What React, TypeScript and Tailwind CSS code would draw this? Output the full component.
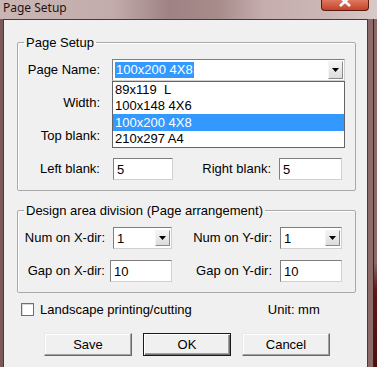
import React from "react";

const sunken =
  "bg-white border border-t-[#7f7f7f] border-l-[#7f7f7f] border-r-[#d0d0d0] border-b-[#d0d0d0]";

function Field({ w, value }: { w: string; value: string }) {
  return (
    <div className={`h-[22px] ${w} ${sunken} flex items-center pl-[3px] leading-none`}>
      {value}
    </div>
  );
}

function DropBtn({ h }: { h: string }) {
  return (
    <div
      className={`${h} w-[15px] ml-auto mr-[1px] flex items-center justify-center border border-t-[#f4f4f4] border-l-[#f4f4f4] border-r-[#8a8a8a] border-b-[#8a8a8a] bg-[linear-gradient(#f4f4f4,#dcdcdc)]`}
    >
      <svg width="7" height="4" viewBox="0 0 7 4">
        <path d="M0 0H7L3.5 4Z" fill="#000" />
      </svg>
    </div>
  );
}

function Combo({ w, value }: { w: string; value: string }) {
  return (
    <div className={`h-[22px] ${w} ${sunken} flex items-center pl-[3px]`}>
      <span className="leading-none">{value}</span>
      <DropBtn h="h-[16px]" />
    </div>
  );
}

function Button({ label, def }: { label: string; def?: boolean }) {
  return (
    <div
      className={`w-[88px] h-[23px] flex items-center justify-center bg-[#f0f0f0] ${
        def
          ? "border border-[#1a1a1a] shadow-[inset_1px_1px_0_#ffffff,inset_-1px_-1px_0_#707070,inset_-2px_-2px_0_#a0a0a0]"
          : "border border-t-[#e8e8e8] border-l-[#e8e8e8] border-r-[#6a6a6a] border-b-[#6a6a6a] shadow-[inset_-1px_-1px_0_#a0a0a0,inset_1px_1px_0_#ffffff]"
      }`}
    >
      {label}
    </div>
  );
}

export default function App() {
  return (
    <div className="w-[377px] h-[367px] overflow-hidden flex flex-col bg-[#7d5a5a] font-['Liberation_Sans',Arial,sans-serif] text-[13px] text-black">
      {/* title bar */}
      <div className="h-[19px] shrink-0 flex bg-[linear-gradient(90deg,#c9b6b4_0%,#c2acab_30%,#9f8283_45%,#a88c8c_58%,#c6adae_70%,#cbb5b5_85%,#d8c9c9_100%)]">
        <div className="pl-[3px] pt-[1px] text-[12px] leading-[14px] font-['Noto_Sans',sans-serif] text-[#1e1414]">
          Page Setup
        </div>
        <div className="ml-auto mr-[8px] w-[48px] h-[11px] rounded-b-[4px] border border-t-0 border-[#5e1a10] bg-[linear-gradient(#e0785f,#c2432a)] flex justify-center overflow-hidden">
          <svg width="14" height="10" viewBox="0 0 14 10" className="-mt-[3px]">
            <path d="M2 0L12 9M12 0L2 9" stroke="#ffffff" strokeWidth="2.6" />
          </svg>
        </div>
      </div>
      {/* body */}
      <div className="flex flex-1 min-h-0">
        <div className="w-[3px] bg-[#7d5a5a]" />
        <div className="w-[365px] shrink-0 border-l border-t border-r border-[#4b3838] bg-[#f0f0f0] pl-[13px] pt-[15px]">
          {/* Group 1 */}
          <fieldset className="w-[339px] border border-[#a9a9a9] rounded-[2px] pt-[9px] pb-[10px] shadow-[inset_1px_1px_0_#ffffff]">
            <legend className="ml-[6px] px-[2px] leading-[15px]">Page Setup</legend>
            <div className="flex flex-col gap-[11px]">
              <div className="flex items-center h-[22px]">
                <div className="w-[82px] text-right">Page Name:</div>
                <div className="relative ml-[12px]">
                  <div className={`h-[22px] w-[233px] ${sunken} flex items-center pl-[2px]`}>
                    <span className="bg-[#3399ff] text-white leading-[16px] px-[1px]">100x200 4X8</span>
                    <DropBtn h="h-[18px]" />
                  </div>
                  <div className="absolute left-0 top-[22px] w-[233px] border border-[#646464] bg-white z-10">
                    <div className="h-[16px] leading-[16px] pl-[2px]">89x119&nbsp;&nbsp;L</div>
                    <div className="h-[16px] leading-[16px] pl-[2px]">100x148 4X6</div>
                    <div className="h-[17px] leading-[17px] pl-[2px] bg-[#3399ff] text-white">100x200 4X8</div>
                    <div className="h-[16px] leading-[16px] pl-[2px]">210x297 A4</div>
                  </div>
                </div>
              </div>
              <div className="flex items-center h-[22px]">
                <div className="w-[82px] text-right">Width:</div>
              </div>
              <div className="flex items-center h-[22px]">
                <div className="w-[82px] text-right">Top blank:</div>
              </div>
              <div className="flex items-center h-[22px]">
                <div className="w-[82px] text-right">Left blank:</div>
                <div className="ml-[13px]">
                  <Field w="w-[60px]" value="5" />
                </div>
                <div className="w-[98px] text-right">Right blank:</div>
                <div className="ml-[8px]">
                  <Field w="w-[63px]" value="5" />
                </div>
              </div>
            </div>
          </fieldset>

          {/* Group 2 */}
          <fieldset className="mt-[12px] w-[339px] border border-[#a9a9a9] rounded-[2px] pt-[9px] pb-[10px] shadow-[inset_1px_1px_0_#ffffff]">
            <legend className="ml-[6px] px-[2px] leading-[15px]">Design area division (Page arrangement)</legend>
            <div className="flex flex-col gap-[11px]">
              <div className="flex items-center h-[22px]">
                <div className="w-[87px] text-right">Num on X-dir:</div>
                <div className="ml-[8px]">
                  <Combo w="w-[59px]" value="1" />
                </div>
                <div className="w-[100px] text-right">Num on Y-dir:</div>
                <div className="ml-[8px]">
                  <Combo w="w-[62px]" value="1" />
                </div>
              </div>
              <div className="flex items-center h-[22px]">
                <div className="w-[87px] text-right">Gap on X-dir:</div>
                <div className="ml-[5px]">
                  <Field w="w-[62px]" value="10" />
                </div>
                <div className="w-[100px] text-right">Gap on Y-dir:</div>
                <div className="ml-[8px]">
                  <Field w="w-[62px]" value="10" />
                </div>
              </div>
            </div>
          </fieldset>

          {/* checkbox row */}
          <div className="mt-[9px] flex items-center h-[15px]">
            <div className="ml-[4px] w-[13px] h-[13px] bg-white border border-[#707070] shadow-[inset_1px_1px_0_#d8d8d8]" />
            <div className="ml-[6px] leading-none">Landscape printing/cutting</div>
            <div className="ml-[76px] leading-none">Unit: mm</div>
          </div>

          {/* buttons */}
          <div className="mt-[16px] ml-[27px] flex gap-[11px]">
            <Button label="Save" />
            <Button label="OK" def />
            <Button label="Cancel" />
          </div>
        </div>
        <div className="flex flex-1">
          <div className="w-[5px] bg-[#8c6a6a]" />
          <div className="w-[1px] bg-[#3a2222]" />
          <div className="flex-1 bg-[linear-gradient(#8a6868_0%,#8a6868_70%,#5a1818_78%,#4a1010_100%)]" />
        </div>
      </div>
    </div>
  );
}
